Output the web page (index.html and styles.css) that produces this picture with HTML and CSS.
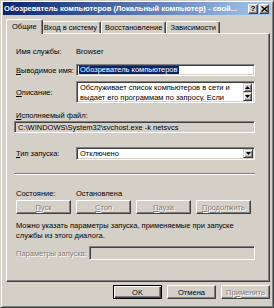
FILE: index.html
```html
<!DOCTYPE html>
<html lang="ru">
<head>
<meta charset="utf-8">
<link rel="stylesheet" href="styles.css">
</head>
<body>
<div class="window">
  <div class="titlebar">
    <span class="title">Обозреватель компьютеров (Локальный компьютер) - свой...</span>
    <div class="tb-btns">
      <span class="tb-btn">?</span>
      <span class="tb-btn"><svg width="7" height="6" viewBox="0 0 7 6"><path d="M0.5 0.5 L6.5 5.5 M6.5 0.5 L0.5 5.5" stroke="#000" stroke-width="1.4"/></svg></span>
    </div>
  </div>
  <div class="tabs">
    <div class="tab active">Общие</div>
    <div class="tab">Вход в систему</div>
    <div class="tab">Восстановление</div>
    <div class="tab">Зависимости</div>
  </div>
  <div class="panel">
    <div class="row r-name"><span class="label">Имя службы:</span><span class="value">Browser</span></div>
    <div class="row r-disp"><span class="label"><u>В</u>ыводимое имя:</span><div class="field sunken"><span class="sel">Обозреватель компьютеров</span></div></div>
    <div class="row r-desc"><span class="label"><u>О</u>писание:</span>
      <div class="field area sunken">
        <div class="area-text">Обслуживает список компьютеров в сети и<br>выдает его программам по запросу. Если</div>
        <div class="scroll">
          <span class="sbtn"><svg width="5" height="3" viewBox="0 0 5 3"><path d="M2.5 0 L5 3 L0 3 Z" fill="#000"/></svg></span>
          <span class="sbtn"><svg width="5" height="3" viewBox="0 0 5 3"><path d="M0 0 L5 0 L2.5 3 Z" fill="#000"/></svg></span>
        </div>
      </div>
    </div>
    <div class="exe-label"><u>И</u>сполняемый файл:</div>
    <div class="field path sunken">C:\WINDOWS\System32\svchost.exe -k netsvcs</div>
    <div class="row r-type"><span class="label"><u>Т</u>ип запуска:</span>
      <div class="field select sunken"><span class="sel-text">Отключено</span>
        <span class="drop"><svg width="5" height="3" viewBox="0 0 5 3"><path d="M0 0 L5 0 L2.5 3 Z" fill="#000"/></svg></span>
      </div>
    </div>
    <div class="sep"></div>
    <div class="row r-state"><span class="label">Состояние:</span><span class="value">Остановлена</span></div>
    <div class="ctl-btns">
      <span class="btn disabled"><u>П</u>уск</span>
      <span class="btn disabled"><u>С</u>топ</span>
      <span class="btn disabled"><u>П</u>ауза</span>
      <span class="btn disabled"><u>П</u>родолжить</span>
    </div>
    <p class="note">Можно указать параметры запуска, применяемые при запуске<br>службы из этого диалога.</p>
    <div class="row r-params"><span class="label disabled-text">Параметры запуска:</span><div class="field params sunken"></div></div>
  </div>
  <div class="footer">
    <span class="btn default">OK</span>
    <span class="btn">Отмена</span>
    <span class="btn disabled">Пр<u>и</u>менить</span>
  </div>
</div>
</body>
</html>
```
FILE: styles.css
```css
* { box-sizing: border-box; }
body {
  margin: 0;
  background: #d4d0c8;
  font-family: "Liberation Sans", Arial, sans-serif;
  font-size: 7.5px;
  color: #000;
}
u { text-decoration: underline; text-underline-offset: 1px; }
.window {
  width: 274px;
  height: 308px;
  background: #d4d0c8;
  border: 1px solid;
  border-color: #d4d0c8 #404040 #404040 #d4d0c8;
  box-shadow: inset 1px 1px #fff, inset -1px -1px #808080;
  padding: 1px 2px 2px 2px;
  display: flex;
  flex-direction: column;
}
.titlebar {
  height: 13px;
  background: linear-gradient(to right, #0a246a, #a6caf0);
  display: flex;
  align-items: center;
  justify-content: space-between;
  padding: 0 2px 0 1px;
}
.title {
  color: #fff;
  font-weight: bold;
  font-size: 7.6px;
  white-space: nowrap;
  overflow: hidden;
}
.tb-btns { display: flex; flex: none; gap: 1px; }
.tb-btn {
  width: 10px;
  height: 10px;
  background: #d4d0c8;
  border: 1px solid;
  border-color: #fff #404040 #404040 #fff;
  box-shadow: inset -1px -1px #808080;
  display: flex;
  align-items: center;
  justify-content: center;
  font-weight: bold;
  font-size: 8px;
  line-height: 1;
}
.tabs {
  height: 18px;
  display: flex;
  align-items: flex-end;
  padding-left: 5px;
  position: relative;
  z-index: 1;
}
.tab {
  height: 12px;
  padding: 0 3px;
  display: flex;
  align-items: center;
  border: 1px solid;
  border-bottom: none;
  border-color: #fff #404040 transparent #fff;
  box-shadow: inset -1px 0 #808080;
  border-radius: 2px 2px 0 0;
  white-space: nowrap;
}
.tab.active {
  height: 15px;
  margin: 0 -2px -1px -2px;
  padding: 0 5px 2px 5px;
  background: #d4d0c8;
  position: relative;
  z-index: 2;
}
.tab.active + .tab { border-left: none; }
.panel {
  margin: 0 1px 0 3px;
  height: 249px;
  border: 1px solid;
  border-color: #fff #404040 #404040 #fff;
  box-shadow: inset -1px -1px #808080;
  padding: 11px 14px 0 9px;
  display: flex;
  flex-direction: column;
}
.row { display: flex; align-items: center; }
.label { width: 60px; flex: none; white-space: nowrap; }
.value { white-space: nowrap; }
.field { background: #fff; flex: 1; }
.sunken {
  border: 1px solid;
  border-color: #808080 #fff #fff #808080;
  box-shadow: inset 1px 1px #404040, inset -1px -1px #d4d0c8;
}
.r-name { height: 12px; }
.r-disp { margin-top: 7px; }
.r-disp .field { height: 12px; padding: 0 2px; display: flex; align-items: center; }
.sel { background: #0a246a; color: #fff; padding: 0 1px; line-height: 8px; white-space: nowrap; }
.r-desc { margin-top: 5px; }
.area { height: 22px; display: flex; padding: 1px 2px 1px 3px; }
.area-text { flex: 1; line-height: 9.5px; white-space: nowrap; overflow: hidden; }
.scroll { width: 9px; display: flex; flex-direction: column; }
.sbtn {
  width: 9px;
  height: 9px;
  background: #d4d0c8;
  border: 1px solid;
  border-color: #d4d0c8 #404040 #404040 #d4d0c8;
  box-shadow: inset 1px 1px #fff, inset -1px -1px #808080;
  display: flex;
  align-items: center;
  justify-content: center;
}
.exe-label { margin-top: 8px; height: 10px; line-height: 10px; }
.path {
  flex: none;
  height: 12px;
  background: #d4d0c8;
  padding: 0 3px;
  display: flex;
  align-items: center;
  white-space: nowrap;
  margin-left: -2px;
}
.r-type { margin-top: 14px; }
.select { height: 13px; display: flex; align-items: center; justify-content: space-between; padding: 2px 2px 2px 3px; }
.sel-text { white-space: nowrap; }
.drop {
  width: 10px;
  height: 9px;
  margin-right: -1px;
  background: #d4d0c8;
  border: 1px solid;
  border-color: #d4d0c8 #404040 #404040 #d4d0c8;
  box-shadow: inset 1px 1px #fff, inset -1px -1px #808080;
  display: flex;
  align-items: center;
  justify-content: center;
}
.sep {
  margin-top: 13px;
  height: 2px;
  border-top: 1px solid #808080;
  border-bottom: 1px solid #fff;
  margin-left: -2px;
}
.r-state { margin-top: 13px; height: 10px; }
.ctl-btns {
  margin-top: 2px;
  display: grid;
  grid-template-columns: repeat(4, 55px);
  gap: 5px;
}
.btn {
  height: 14px;
  background: #d4d0c8;
  border: 1px solid;
  border-color: #fff #404040 #404040 #fff;
  box-shadow: inset -1px -1px #808080;
  display: flex;
  align-items: center;
  justify-content: center;
  white-space: nowrap;
}
.disabled, .disabled-text { color: #808080; text-shadow: 1px 1px #fff; }
.note { margin: 7px 0 0 0; line-height: 10px; white-space: nowrap; }
.r-params { margin-top: 5px; }
.r-params .label { width: 73px; }
.params { height: 14px; background: #d4d0c8; }
.footer {
  margin-top: 3px;
  display: flex;
  justify-content: flex-end;
  gap: 5px;
  padding-right: 1px;
}
.footer .btn { width: 49px; height: 14px; }
.btn.default {
  border: 1px solid #000;
  box-shadow: inset 1px 1px #fff, inset -1px -1px #404040, inset -2px -2px #808080;
}
```
